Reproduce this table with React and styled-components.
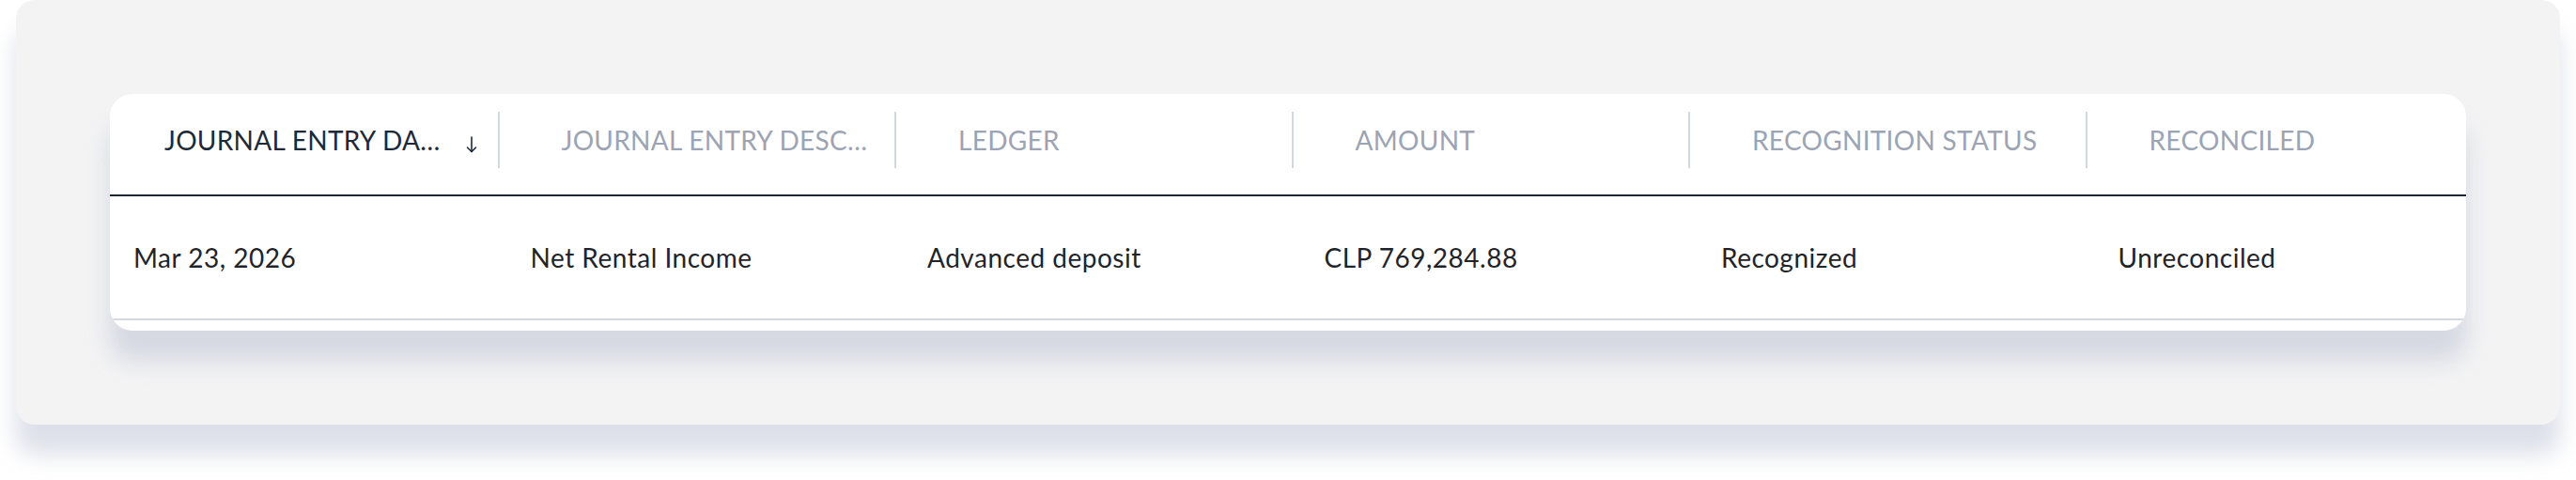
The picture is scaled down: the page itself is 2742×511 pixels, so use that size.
import React from 'react';
import styled, { createGlobalStyle } from 'styled-components';

const GlobalStyle = createGlobalStyle`
  html, body {
    margin: 0;
    padding: 0;
    background: #ffffff;
  }
  body {
    font-family: Lato, "Open Sans", sans-serif;
  }
`;

const columns = [
  { key: 'date', label: 'JOURNAL ENTRY DA…', sorted: true },
  { key: 'desc', label: 'JOURNAL ENTRY DESC…' },
  { key: 'ledger', label: 'LEDGER' },
  { key: 'amount', label: 'AMOUNT' },
  { key: 'status', label: 'RECOGNITION STATUS' },
  { key: 'reconciled', label: 'RECONCILED', last: true }
];

const rows = [
  {
    date: 'Mar 23, 2026',
    desc: 'Net Rental Income',
    ledger: 'Advanced deposit',
    amount: 'CLP 769,284.88',
    status: 'Recognized',
    reconciled: 'Unreconciled'
  }
];

const shadow = '0 32px 24px rgba(170, 178, 200, 0.4)';

const Page = styled.div`
  padding: 0 17px 60px;
`;

const Panel = styled.div`
  background: #f3f3f4;
  border-radius: 20px;
  padding: 100px;
  box-shadow: ${shadow};
`;

const Card = styled.div`
  background: #ffffff;
  border-radius: 24px;
  overflow: hidden;
  padding-bottom: 11px;
  box-shadow: ${shadow};
`;

const Table = styled.div`
  margin-left: -8px;
  width: max-content;
`;

const HeadRow = styled.div`
  display: grid;
  grid-template-columns: repeat(${(props) => props.count}, 422.5px);
  align-items: center;
  height: 109px;
  padding-bottom: 9px;
  box-sizing: border-box;
  border-bottom: 2px solid #1c2634;
`;

const HeadCell = styled.div`
  display: flex;
  align-items: center;
  height: 60px;
  padding-left: 66px;
  box-sizing: border-box;
  border-right: ${(props) => (props.last ? 'none' : '2px solid #d3d7e0')};
  font-size: 28px;
  letter-spacing: 0.3px;
  white-space: nowrap;
  color: ${(props) => (props.active ? '#1d2939' : '#9ca4b3')};
`;

const SortIcon = styled.svg`
  margin-left: 26px;
  margin-top: 10px;
  flex-shrink: 0;
`;

const BodyRow = styled.div`
  display: grid;
  grid-template-columns: repeat(${(props) => props.count}, 422.5px);
  align-items: center;
  height: 132px;
  box-sizing: border-box;
  border-bottom: 2px solid #d5d9e1;
`;

const Cell = styled.div`
  padding-left: 33px;
  font-size: 28px;
  letter-spacing: 0.5px;
  color: #1f2429;
  white-space: nowrap;
`;

const SortArrow = () => (
  <SortIcon width="14" height="18" viewBox="0 0 14 18" fill="none">
    <path d="M7 1 V16.5" stroke="#1d2939" strokeWidth="1.6" strokeLinecap="round" />
    <path d="M2.5 12 L7 16.5 L11.5 12" stroke="#1d2939" strokeWidth="1.6" strokeLinecap="round" strokeLinejoin="round" />
  </SortIcon>
);

export default function App() {
  return (
    <>
      <GlobalStyle />
      <Page>
        <Panel>
          <Card>
            <Table>
              <HeadRow count={columns.length}>
                {columns.map((col) => (
                  <HeadCell key={col.key} active={col.sorted} last={col.last}>
                    {col.label}
                    {col.sorted && <SortArrow />}
                  </HeadCell>
                ))}
              </HeadRow>
              {rows.map((row, i) => (
                <BodyRow key={i} count={columns.length}>
                  {columns.map((col) => (
                    <Cell key={col.key}>{row[col.key]}</Cell>
                  ))}
                </BodyRow>
              ))}
            </Table>
          </Card>
        </Panel>
      </Page>
    </>
  );
}
